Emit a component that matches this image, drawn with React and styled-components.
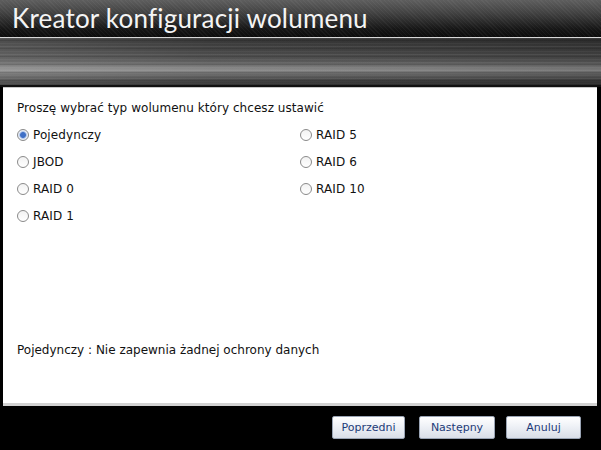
import React, { useState } from "react";
import styled, { createGlobalStyle } from "styled-components";

const Global = createGlobalStyle`
  html, body { margin: 0; padding: 0; background: #000; }
  body { width: 601px; height: 450px; overflow: hidden; }
  #root { width: 601px; height: 450px; }
`;

const Window = styled.div`
  width: 601px;
  height: 450px;
  display: flex;
  flex-direction: column;
  background: #000;
  box-sizing: border-box;
`;

const TitleBar = styled.div`
  height: 38px;
  flex: none;
  display: flex;
  align-items: center;
  padding-left: 12px;
  box-sizing: border-box;
  border-bottom: 1px solid #d8d8d8;
  background:
    repeating-linear-gradient(45deg, rgba(255,255,255,0.04) 0 1px, transparent 1px 3px),
    linear-gradient(180deg, #5e5e5e 0%, #424242 35%, #171717 78%, #0c0c0c 100%);
`;

const Title = styled.h1`
  margin: 0;
  font-family: "Lato", "DejaVu Sans", sans-serif;
  font-weight: 400;
  font-size: 26px;
  letter-spacing: 0.2px;
  color: #f4f4f4;
  line-height: 1;
  padding-bottom: 2px;
`;

const MetalBand = styled.div`
  height: 47px;
  flex: none;
  border-bottom: 2px solid #111;
  background:
    repeating-linear-gradient(180deg, rgba(255,255,255,0.07) 0 1px, transparent 1px 2px, rgba(0,0,0,0.12) 2px 3px, transparent 3px 5px, rgba(255,255,255,0.04) 5px 6px, transparent 6px 8px),
    linear-gradient(90deg, rgba(255,255,255,0.12) 0%, rgba(255,255,255,0.02) 35%, rgba(0,0,0,0.05) 70%, rgba(0,0,0,0.15) 100%),
    linear-gradient(180deg, #323232 0%, #3e3e3e 20%, #4c4c4c 40%, #5c5c5c 52%, #7e7e7e 62%, #8a8a8a 68%, #6a6a6a 76%, #484848 88%, #2e2e2e 100%);
`;

const Content = styled.div`
  flex: 1;
  margin: 0 4px 0 3px;
  background: #fff;
  border-top: 1px solid #c8c8c8;
  border-bottom: 3px solid #d2d2d2;
  padding: 13px 0 0 14px;
  display: flex;
  flex-direction: column;
  font-family: "DejaVu Sans", Verdana, sans-serif;
  font-size: 12px;
  color: #111;
`;

const Prompt = styled.div`
  line-height: 15px;
  letter-spacing: 0.05px;
`;

const Options = styled.div`
  display: grid;
  grid-template-columns: 283px 1fr;
  grid-auto-flow: column;
  grid-template-rows: repeat(4, 27px);
  margin-top: 5px;
`;

const Option = styled.label`
  display: flex;
  align-items: center;
  gap: 4px;
  cursor: pointer;
  letter-spacing: 0.1px;
`;

const RadioDot = styled.span`
  width: 12px;
  height: 12px;
  border-radius: 50%;
  box-sizing: border-box;
  border: 1px solid #8a8a8a;
  background: ${(p) => (p.$on ? "radial-gradient(circle, #3e6fc6 0 2.5px, #9fb9e6 3.2px, #e8eef8 4.2px)" : "linear-gradient(180deg, #f2f2f2, #fff)")};
  flex: none;
`;

const Description = styled.div`
  margin-top: auto;
  margin-bottom: 46px;
  letter-spacing: 0px;
`;

const Footer = styled.div`
  height: 44px;
  flex: none;
  display: flex;
  justify-content: flex-end;
  align-items: flex-start;
  padding: 10px 20px 0 0;
  box-sizing: border-box;
`;

const Button = styled.button`
  width: ${(p) => p.$w}px;
  height: 23px;
  margin-left: ${(p) => p.$gap}px;
  border: 1px solid #9aa4b4;
  border-radius: 2px;
  background: linear-gradient(180deg, #ffffff 0%, #eef1f6 45%, #d9dee7 100%);
  font-family: "DejaVu Sans", Verdana, sans-serif;
  font-size: 11px;
  letter-spacing: 0px;
  color: #1d3b78;
  padding: 0;
  cursor: pointer;
`;

const items = ["Pojedynczy", "JBOD", "RAID 0", "RAID 1", "RAID 5", "RAID 6", "RAID 10"];

export default function App() {
  const [sel, setSel] = useState("Pojedynczy");
  return (
    <>
      <Global />
      <Window>
        <TitleBar>
          <Title>Kreator konfiguracji wolumenu</Title>
        </TitleBar>
        <MetalBand />
        <Content>
          <Prompt>Proszę wybrać typ wolumenu który chcesz ustawić</Prompt>
          <Options>
            {items.map((it) => (
              <Option key={it} onClick={() => setSel(it)}>
                <RadioDot $on={sel === it} />
                {it}
              </Option>
            ))}
          </Options>
          <Description>{sel} : Nie zapewnia żadnej ochrony danych</Description>
        </Content>
        <Footer>
          <Button $w={73} $gap={0}>Poprzedni</Button>
          <Button $w={76} $gap={14}>Następny</Button>
          <Button $w={75} $gap={11}>Anuluj</Button>
        </Footer>
      </Window>
    </>
  );
}
